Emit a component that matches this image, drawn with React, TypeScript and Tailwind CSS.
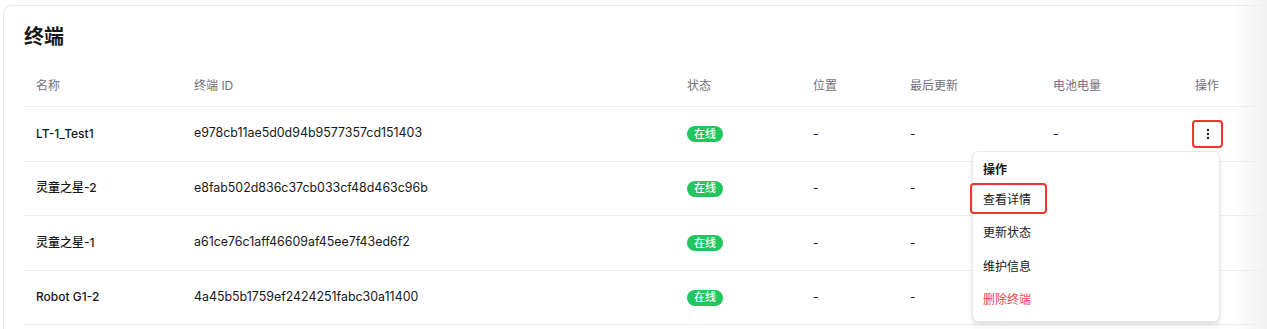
import React from "react";

const rows = [
  { name: "LT-1_Test1", id: "e978cb11ae5d0d94b9577357cd151403" },
  { name: "灵童之星-2", id: "e8fab502d836c37cb033cf48d463c96b" },
  { name: "灵童之星-1", id: "a61ce76c1aff46609af45ee7f43ed6f2" },
  { name: "Robot G1-2", id: "4a45b5b1759ef2424251fabc30a11400" },
];

const cols = "grid grid-cols-[158px_493px_126px_97px_143px_142px_1fr]";

function Dots() {
  return (
    <svg width="14" height="14" viewBox="0 0 24 24" fill="none" stroke="#18181b" strokeWidth="2.6" strokeLinecap="round">
      <circle cx="12" cy="5" r="0.8" />
      <circle cx="12" cy="12" r="0.8" />
      <circle cx="12" cy="19" r="0.8" />
    </svg>
  );
}

export default function App() {
  return (
    <div
      className="relative w-[1267px] h-[329px] overflow-hidden bg-white"
      style={{ fontFamily: '"Inter", "Noto Sans CJK SC", sans-serif' }}
    >
      <div className="ml-[3px] mt-[5px] w-[1290px] h-[400px] rounded-[9px] border border-[#e8e8eb] bg-white pl-[19px] pt-[17px]">
        <div className="pl-[1px] h-[28px] leading-[28px] text-[20px] font-semibold text-[#18181b]">终端</div>
        <div className="mt-[15px] w-[1260px]">
          <div className={`${cols} h-[41px] border-b border-[#ececef] items-center text-[12px] text-[#71717a]`}>
            <div className="pl-[13px]">名称</div>
            <div className="pl-[13px]">终端 ID</div>
            <div className="pl-[13px]">状态</div>
            <div className="pl-[13px]">位置</div>
            <div className="pl-[13px]">最后更新</div>
            <div className="pl-[13px]">电池电量</div>
            <div className="pl-[13px]">操作</div>
          </div>
          {rows.map((r, i) => (
            <div
              key={i}
              className={`${cols} h-[54.5px] border-b border-[#ececef] items-center text-[12px] text-[#18181b]`}
            >
              <div className="pl-[13px] font-medium">{r.name}</div>
              <div className="pl-[13px] text-[12.4px]">{r.id}</div>
              <div className="pl-[13px]">
                <span className="inline-flex h-[16px] items-center rounded-full bg-[#22c55e] px-[7px] text-[11px] font-medium text-white">
                  在线
                </span>
              </div>
              <div className="pl-[13px]">-</div>
              <div className="pl-[13px]">-</div>
              <div className="pl-[13px]">{i === 0 ? "-" : ""}</div>
              <div className="pl-[10px]">
                {i === 0 && (
                  <div className="flex h-[28px] w-[31px] items-center justify-center rounded-[4px] border-2 border-[#f0352a]">
                    <Dots />
                  </div>
                )}
              </div>
            </div>
          ))}
        </div>
      </div>

      <div className="absolute left-[972px] top-[151px] w-[248px] rounded-[6px] border border-[#e8e8eb] bg-white p-[4px] text-[12px] text-[#18181b] shadow-md">
        <div className="flex h-[27px] items-center px-[6px] font-semibold">操作</div>
        <div className="flex h-[33.5px] items-center px-[6px]">查看详情</div>
        <div className="flex h-[33.5px] items-center px-[6px]">更新状态</div>
        <div className="flex h-[33.5px] items-center px-[6px]">维护信息</div>
        <div className="flex h-[33.5px] items-center px-[6px] text-[#ef4444]">删除终端</div>
        <div className="absolute left-[-3px] top-[31px] h-[31px] w-[77px] rounded-[4px] border-2 border-[#f0352a]" />
      </div>

      <div className="pointer-events-none absolute right-0 top-0 h-full w-[32px] bg-gradient-to-r from-[#ffffff00] to-[#f1f1f1]" />
    </div>
  );
}
